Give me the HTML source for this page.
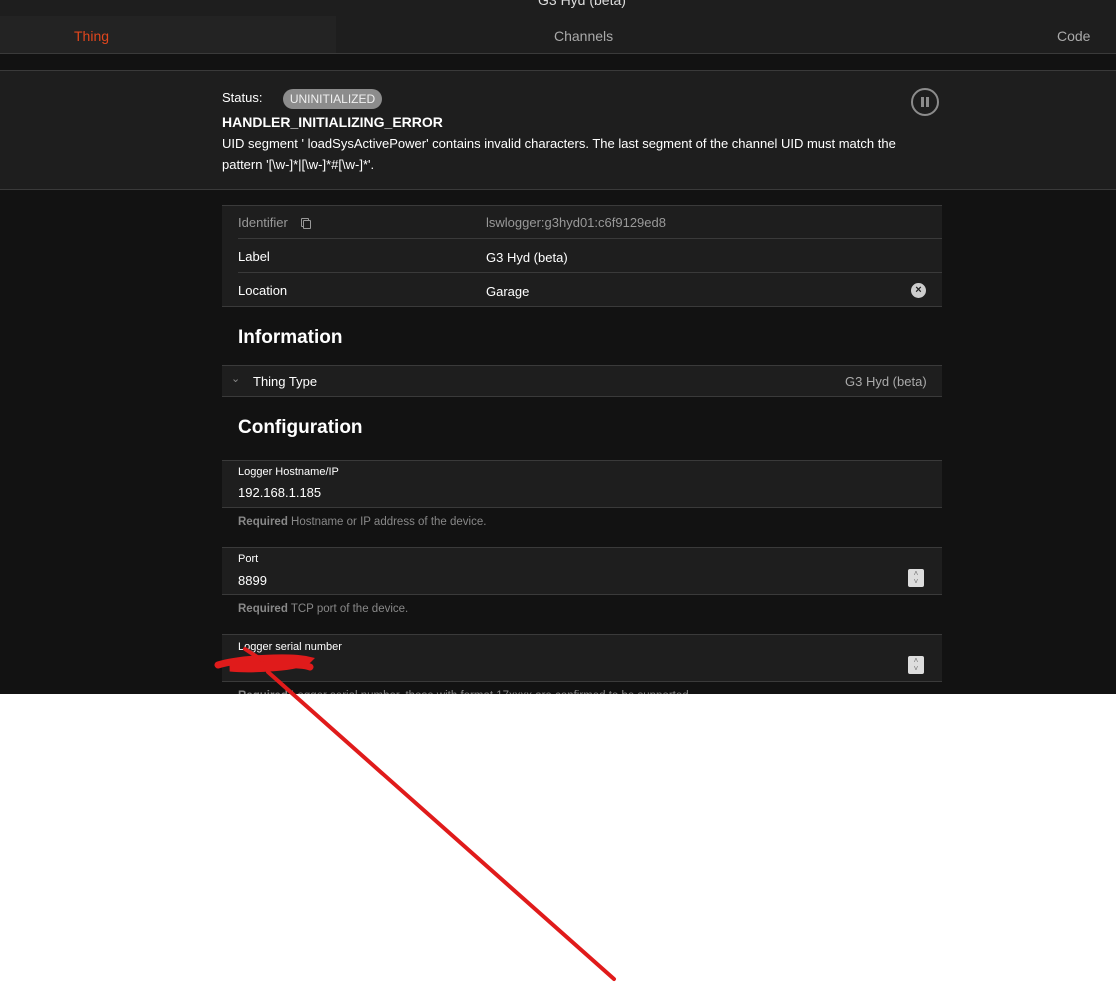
<!DOCTYPE html>
<html><head><meta charset="utf-8"><style>
*{margin:0;padding:0;box-sizing:border-box}
body{width:1116px;height:983px;background:#fff;font-family:"Liberation Sans",sans-serif;position:relative;overflow:hidden;color:#fff}
.a{position:absolute}
.dark{left:0;top:0;width:1116px;height:694px;background:#121212;overflow:hidden}
.t{font-size:13px;white-space:nowrap}
.row{position:absolute;left:222px;width:720px;background:#1e1e1e}
.line{position:absolute;height:1px;background:#3a3a3a}
.spin{position:absolute;left:908px;width:16px;height:18px;background:#ddd;border-radius:2px;color:#777;font-size:8px;line-height:8px;text-align:center;padding-top:1px}
</style></head><body>
<div class="a dark">
  <div class="a" style="left:0;top:0;width:1116px;height:16px;background:#1e1e1e"></div>
  <div class="a t" style="left:538px;top:-8px;color:#ddd;font-size:14px">G3 Hyd (beta)</div>
  <div class="a" style="left:0;top:16px;width:336px;height:37px;background:#232323"></div>
  <div class="a" style="left:336px;top:16px;width:780px;height:37px;background:#1e1e1e"></div>
  <div class="a" style="left:0;top:53px;width:1116px;height:1px;background:#3a3a3a"></div>
  <div class="a t" style="left:74px;top:28px;color:#e0461d;font-size:14px">Thing</div>
  <div class="a t" style="left:554px;top:28px;color:#aaa;font-size:14px">Channels</div>
  <div class="a t" style="left:1057px;top:28px;color:#aaa;font-size:14px">Code</div>

  <div class="a" style="left:0;top:70px;width:1116px;height:120px;background:#1e1e1e;border-top:1px solid #3a3a3a;border-bottom:1px solid #3a3a3a"></div>
  <div class="a t" style="left:222px;top:90px">Status:</div>
  <div class="a t" style="left:283px;top:89px;width:99px;height:20px;border-radius:10px;background:#8c8c8c;font-size:12px;line-height:20px;text-align:center;color:#f0f0f0">UNINITIALIZED</div>
  <div class="a" style="left:911px;top:88px;width:28px;height:28px;border:2px solid #8c8c8c;border-radius:50%"></div>
  <div class="a" style="left:921px;top:97px;width:3px;height:10px;background:#8c8c8c"></div>
  <div class="a" style="left:926px;top:97px;width:3px;height:10px;background:#8c8c8c"></div>
  <div class="a t" style="left:222px;top:114px;font-weight:bold;font-size:14px">HANDLER_INITIALIZING_ERROR</div>
  <div class="a t" style="left:222px;top:136px;font-size:13px">UID segment ' loadSysActivePower' contains invalid characters. The last segment of the channel UID must match the</div>
  <div class="a t" style="left:222px;top:157px;font-size:13px">pattern '[\w-]*|[\w-]*#[\w-]*'.</div>

  <div class="row" style="top:205px;height:102px;border-top:1px solid #3a3a3a;border-bottom:1px solid #3a3a3a"></div>
  <div class="line" style="left:238px;top:238px;width:704px"></div>
  <div class="line" style="left:238px;top:272px;width:704px"></div>
  <div class="a t" style="left:238px;top:215px;color:#999">Identifier</div>
  <div class="a" style="left:301px;top:218px;width:8px;height:9px;border:1px solid #999;border-radius:1px"></div>
  <div class="a" style="left:303px;top:220px;width:8px;height:9px;border:1px solid #999;border-radius:1px;background:#1e1e1e"></div>
  <div class="a t" style="left:486px;top:215px;color:#999">lswlogger:g3hyd01:c6f9129ed8</div>
  <div class="a t" style="left:238px;top:249px">Label</div>
  <div class="a t" style="left:486px;top:250px">G3 Hyd (beta)</div>
  <div class="a t" style="left:238px;top:283px">Location</div>
  <div class="a t" style="left:486px;top:284px">Garage</div>
  <div class="a" style="left:911px;top:283px;width:15px;height:15px;border-radius:50%;background:#ccc;color:#1e1e1e;font-size:11px;line-height:15px;text-align:center;font-weight:bold">×</div>

  <div class="a t" style="left:238px;top:327px;font-size:19px;font-weight:bold">Information</div>
  <div class="row" style="top:365px;height:32px;border-top:1px solid #3a3a3a;border-bottom:1px solid #3a3a3a"></div>
  <div class="a t" style="left:231px;top:372px;color:#888;font-size:11px">&#8964;</div>
  <div class="a t" style="left:253px;top:374px">Thing Type</div>
  <div class="a t" style="left:845px;top:374px;color:#aaa">G3 Hyd (beta)</div>

  <div class="a t" style="left:238px;top:417px;font-size:19px;font-weight:bold">Configuration</div>

  <div class="row" style="top:460px;height:48px;border-top:1px solid #3a3a3a;border-bottom:1px solid #3a3a3a"></div>
  <div class="a t" style="left:238px;top:466px;font-size:11px">Logger Hostname/IP</div>
  <div class="a t" style="left:238px;top:485px">192.168.1.185</div>
  <div class="a t" style="left:238px;top:516px;color:#888;font-size:11.5px"><b>Required</b> Hostname or IP address of the device.</div>

  <div class="row" style="top:547px;height:48px;border-top:1px solid #3a3a3a;border-bottom:1px solid #3a3a3a"></div>
  <div class="a t" style="left:238px;top:553px;font-size:11px">Port</div>
  <div class="a t" style="left:238px;top:573px">8899</div>
  <div class="spin" style="top:569px">&#708;<br>&#709;</div>
  <div class="a t" style="left:238px;top:603px;color:#888;font-size:11.5px"><b>Required</b> TCP port of the device.</div>

  <div class="row" style="top:634px;height:48px;border-top:1px solid #3a3a3a;border-bottom:1px solid #3a3a3a"></div>
  <div class="a t" style="left:238px;top:641px;font-size:11px">Logger serial number</div>
  <div class="spin" style="top:656px">&#708;<br>&#709;</div>
  <div class="a t" style="left:238px;top:690px;color:#888;font-size:11.5px"><b>Required</b> Logger serial number, those with format 17xxxx are confirmed to be supported</div>
</div>
<div class="a" style="left:0;top:694px;width:1116px;height:289px;background:#fff"></div>
<svg class="a" style="left:0;top:0" width="1116" height="983">
  <path d="M218 665 C240 658 290 656 308 660 C300 668 250 670 230 668 C260 664 300 663 310 667" stroke="#e01b1b" stroke-width="7" fill="none" stroke-linecap="round"/>
  <path d="M245 649 L262 660" stroke="#e01b1b" stroke-width="4" fill="none" stroke-linecap="round"/>
  <path d="M268 672 L614 979" stroke="#e01b1b" stroke-width="4" fill="none" stroke-linecap="round"/>
</svg>
</body></html>
